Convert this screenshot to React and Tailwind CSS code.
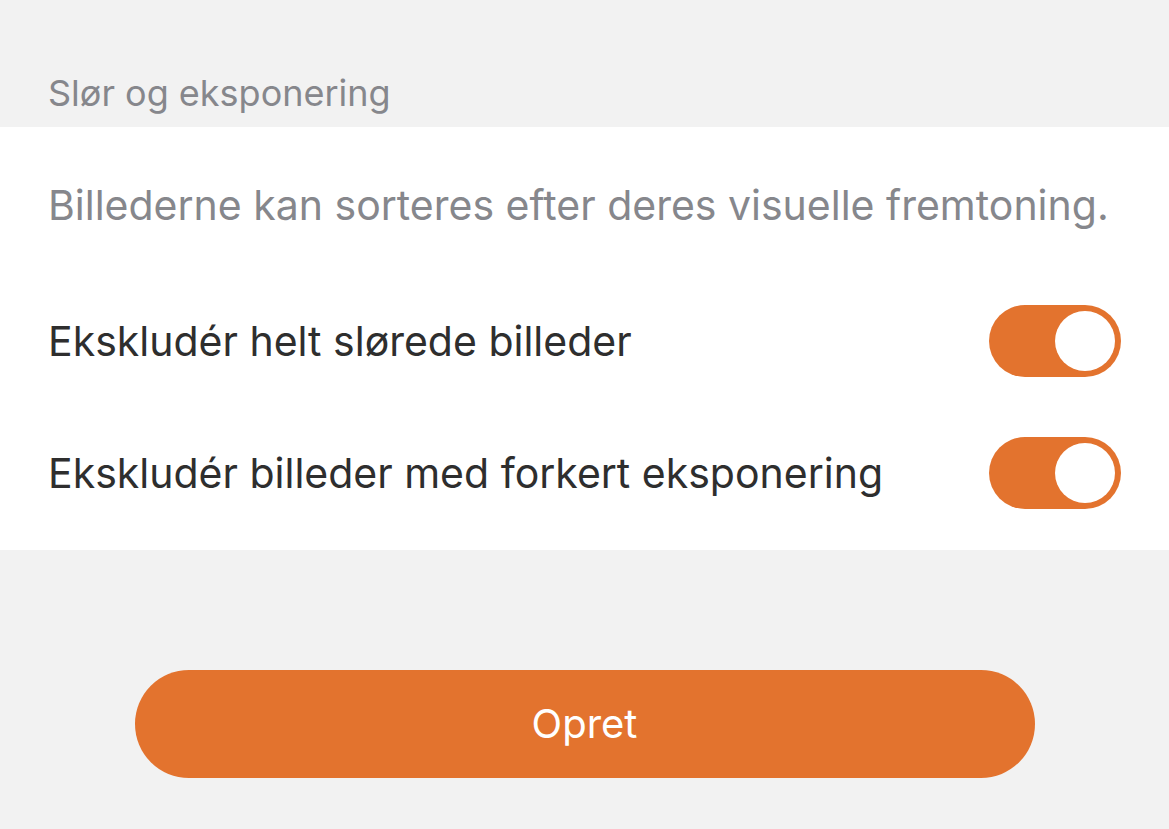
export default function App() {
  const Toggle = () => (
    <div className="w-[132px] h-[72px] rounded-full bg-[#e3732e] flex items-center justify-end pr-[6px] shrink-0">
      <div className="w-[60px] h-[60px] rounded-full bg-white" />
    </div>
  );
  return (
    <div className="w-[1169px] h-[829px] bg-[#f2f2f2] flex flex-col" style={{ fontFamily: "Inter, 'Noto Sans', sans-serif" }}>
      <div className="h-[127px] flex items-end px-[48px] pb-[12px]">
        <span className="text-[36px] leading-[44px] text-[#86878c]">Slør og eksponering</span>
      </div>
      <div className="bg-white h-[423px] flex flex-col px-[48px]">
        <div className="h-[148px] flex items-center pt-[8px]">
          <span className="text-[41px] leading-[48px] text-[#86878c] whitespace-nowrap">Billederne kan sorteres efter deres visuelle fremtoning.</span>
        </div>
        <div className="h-[132px] flex items-center justify-between">
          <span className="text-[41px] leading-[48px] text-[#2e2e2e]">Ekskludér helt slørede billeder</span>
          <Toggle />
        </div>
        <div className="h-[132px] flex items-center justify-between">
          <span className="text-[41px] leading-[48px] text-[#2e2e2e]">Ekskludér billeder med forkert eksponering</span>
          <Toggle />
        </div>
      </div>
      <div className="flex justify-center pt-[120px]">
        <button className="w-[900px] h-[108px] rounded-full bg-[#e3732e] text-white text-[40px] leading-[48px]">Opret</button>
      </div>
    </div>
  );
}
